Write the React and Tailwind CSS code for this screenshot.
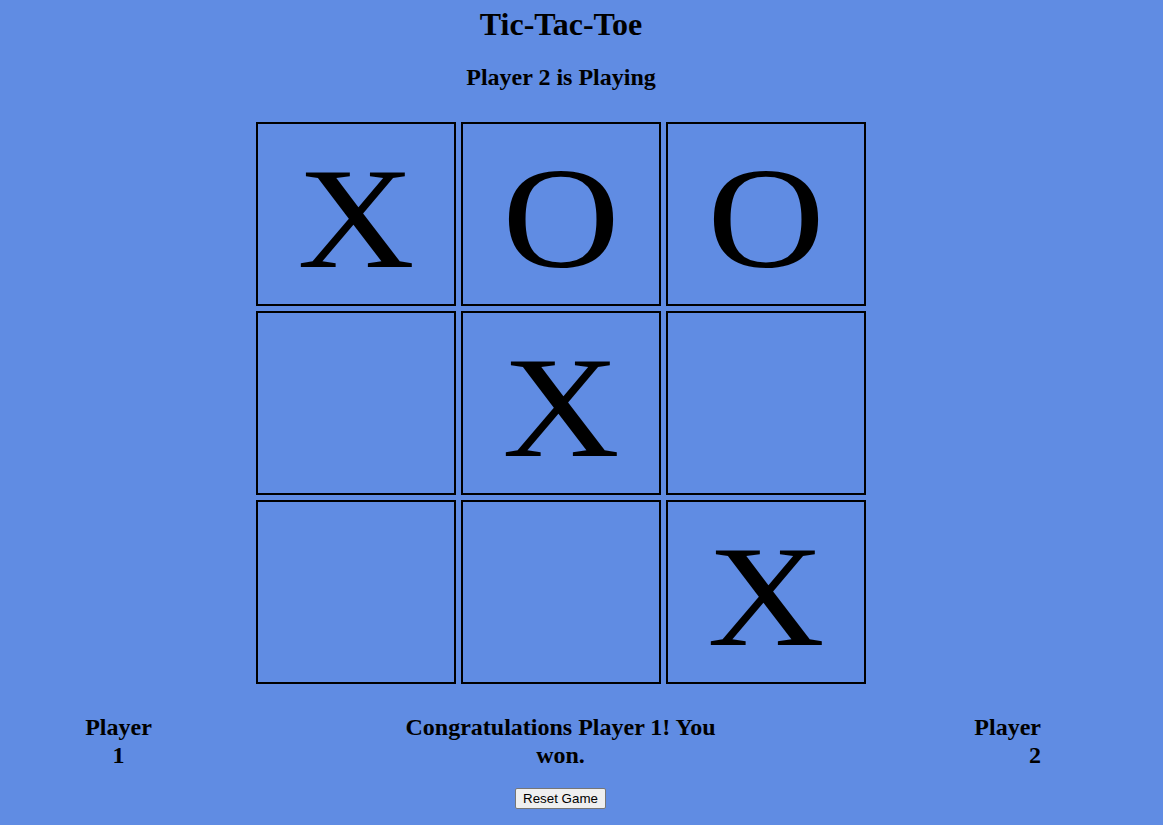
import React from "react";

const board = ["X", "O", "O", "", "X", "", "", "", "X"];

export default function App() {
  return (
    <div
      className="w-[1163px] h-[825px] bg-[#608ce3] text-black flex flex-col"
      style={{ fontFamily: '"Liberation Serif", "Times New Roman", serif' }}
    >
      <div className="w-[1122px] flex flex-col items-center">
        <h1 className="pt-[6px] text-[32px] leading-[36px] font-bold">Tic-Tac-Toe</h1>
        <h2 className="mt-[21px] text-[24px] leading-[28px] font-bold">Player 2 is Playing</h2>
        <div className="mt-[31px] grid grid-cols-[200px_200px_200px] grid-rows-[184px_184px_184px] gap-[5px]">
          {board.map((v, i) => (
            <div
              key={i}
              className="border-2 border-black flex items-center justify-center pt-[10px] text-[144px] font-normal"
            >
              <span className="inline-block scale-x-[1.13]">{v}</span>
            </div>
          ))}
        </div>
      </div>
      <div className="mt-[29px] flex text-[24px] leading-[28px] font-bold">
        <div className="ml-[85px] w-[67px] text-center">Player 1</div>
        <div className="flex-1 flex flex-col items-center pr-[5px]">
          <div className="w-[316px] text-center">Congratulations Player 1! You won.</div>
          <button
            className="mt-[19px] bg-[#efefef] border border-[#767676] rounded-[2px] px-[7px] py-[2px] text-[13.33px] leading-[15px] font-normal"
            style={{ fontFamily: '"Liberation Sans", Arial, sans-serif' }}
          >
            Reset Game
          </button>
        </div>
        <div className="mr-[122px] w-[67px] text-right">Player 2</div>
      </div>
    </div>
  );
}
